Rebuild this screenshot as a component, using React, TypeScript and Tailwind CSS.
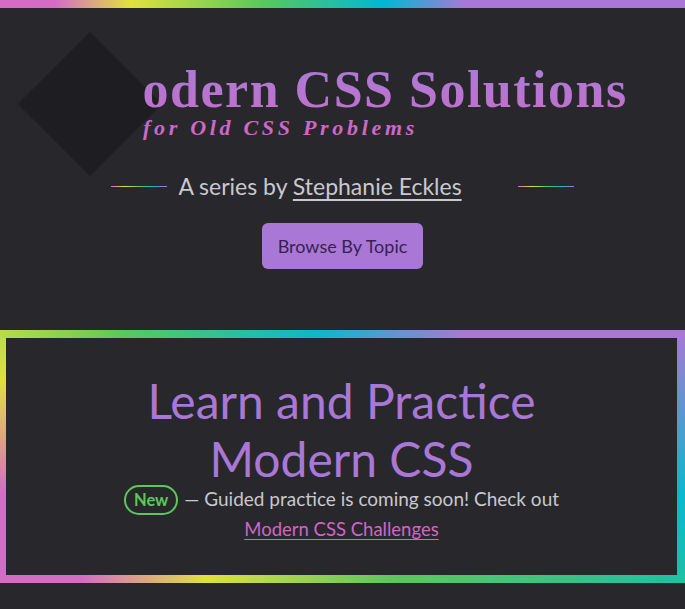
export default function App() {
  return (
    <main className="relative min-h-screen bg-[#27272c] font-['Lato',sans-serif] text-[#c9c9cf]">
      {/* rainbow bar */}
      <div className="h-2 bg-[linear-gradient(90deg,#d66bc6_8%,#e0e03f_19%,#5bc95a_38%,#00b8d4_56%,#a978d6_68%)]" />

      {/* logo diamond */}
      <div className="absolute left-[39px] top-[53px] h-[102px] w-[102px] rotate-45 bg-[#1e1d22]" />

      <header className="flex flex-col items-center">
        <div className="relative w-full pl-[92px] pt-[56px]">
          <h1 className="font-['Liberation_Serif',serif] text-[52px] font-bold leading-none tracking-[1.5px]">
            <span className="text-transparent">M</span>
            <span className="bg-[linear-gradient(180deg,#a77dd9,#c46fc9)] bg-clip-text text-transparent">
              odern CSS Solutions
            </span>
          </h1>
          <p className="ml-[51px] mt-[1px] font-['Liberation_Serif',serif] text-[22px] font-bold italic leading-none tracking-[3.7px] text-[#cf67c6]">
            for Old CSS Problems
          </p>
        </div>

        <div className="mt-[33px] flex items-center gap-[11px]">
          <span className="h-px w-14 bg-[linear-gradient(90deg,#d66bc6,#e0e03f,#5bc95a,#0ab8cf,#a978d6)]" />
          <p className="mr-[45px] text-[23px] leading-[28px]">
            A series by{" "}
            <a href="#" className="underline underline-offset-4">
              Stephanie Eckles
            </a>
          </p>
          <span className="h-px w-14 bg-[linear-gradient(90deg,#d66bc6,#e0e03f,#5bc95a,#0ab8cf,#a978d6)]" />
        </div>

        <a
          href="#"
          className="mt-[23px] rounded-md bg-[#a978d6] px-4 py-[11px] text-[18px] leading-6 text-[#3a1f4f]"
        >
          Browse By Topic
        </a>
      </header>

      {/* practice callout with rainbow frame */}
      <section className="mt-[61px] py-2 pl-[6px] pr-2 [background:linear-gradient(90deg,#b8dc4a,#5bc95a_18%,#0ab8cf_46%,#a978d6_68%)_top/100%_8px_no-repeat,linear-gradient(90deg,#d66bc6_12%,#e0e03f_30%,#5bc95a_57%,#1fc0a4)_bottom/100%_8px_no-repeat,linear-gradient(180deg,#b8dc4a,#e0e03f_20%,#d66bc6_65%)_left/6px_100%_no-repeat,linear-gradient(180deg,#a978d6,#0ab8cf_65%,#1fc0a4)_right/8px_100%_no-repeat]">
        <div className="flex flex-col items-center bg-[#27272c] pb-[32px] pt-[34px] text-center">
          <h2 className="text-[48px] leading-[58px] text-[#a978d6]">
            Learn and Practice
            <br />
            Modern CSS
          </h2>
          <p className="mt-[-5px] text-[19px] leading-[32px]">
            <span className="mr-[6px] inline-block rounded-full border-2 border-[#5bc95a] px-[8px] text-[16.5px] font-bold leading-[26px] text-[#5bc95a]">
              New
            </span>
            — Guided practice is coming soon! Check out
          </p>
          <a href="#" className="text-[18.5px] leading-[28px] text-[#d365c6] underline underline-offset-[3px]">
            Modern CSS Challenges
          </a>
        </div>
      </section>
    </main>
  );
}
